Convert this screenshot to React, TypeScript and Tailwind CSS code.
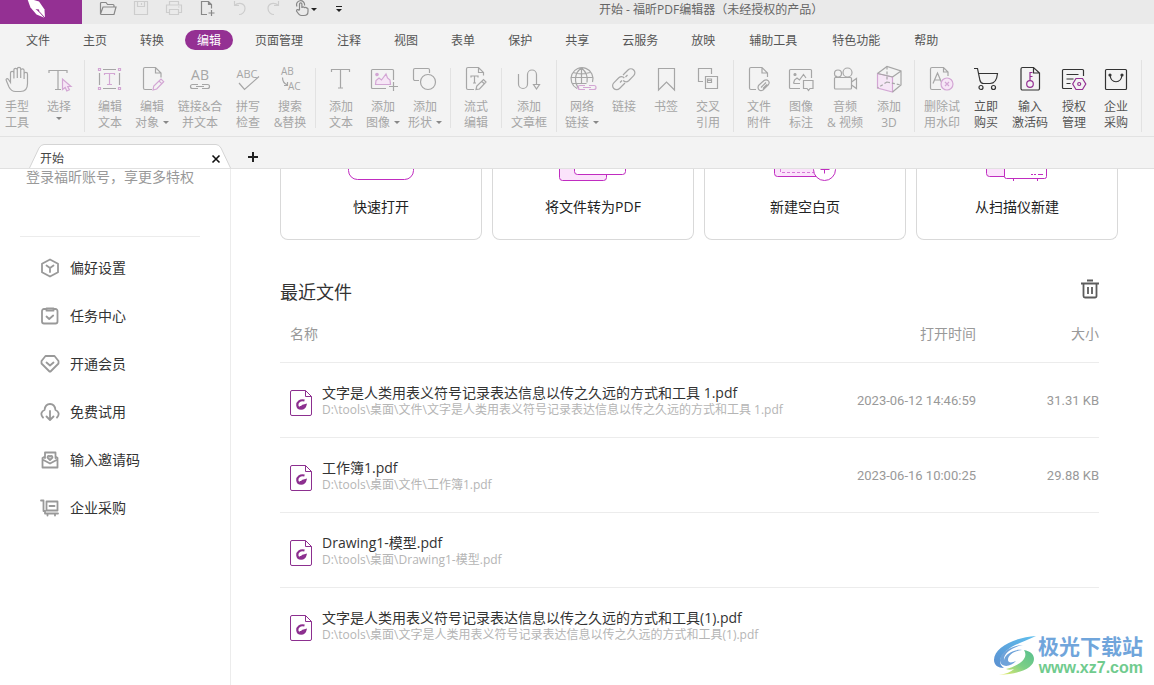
import type { ReactNode } from 'react';

type Tool = {
  lines: string[];
  icon: ReactNode;
  width?: string;
  caret?: boolean;
  active?: boolean;
};

type ToolGroup = {
  tools: Tool[];
  className?: string;
  line: string;
};

type RecentFile = {
  name: string;
  path: string;
  opened: string;
  size: string;
};

const PINK = '#d3a6d4';
const PURPLE = '#943093';

const menus = [
  '文件', '主页', '转换', '编辑', '页面管理', '注释', '视图', '表单',
  '保护', '共享', '云服务', '放映', '辅助工具', '特色功能', '帮助',
];

const docShape = 'M14 24.5H7a1.5 1.5 0 0 1-1.5-1.5V4A1.5 1.5 0 0 1 7 2.5h10.5l5.5 5.5v4.5M17.5 2.5V8H23';

const groups: ToolGroup[] = [
  {
    className: '',
    line: 'my-1',
    tools: [
      {
        lines: ['手型', '工具'],
        width: 'w-[34px]',
        icon: (
          <path d="M7.5 17.5l-2-3c-1.2-1.6-3-.6-2.2 1L6 22c1.500 3 3.500 4.500 6.500 4.500h5c4.500 0 7-3 7-8V9a1.700 1.700 0 0 0-3.400 0v5V5.500a1.700 1.700 0 0 0-3.400 0V13V4a1.700 1.700 0 0 0-3.400 0v9V5a1.700 1.700 0 0 0-3.400 0v8.500V8a1.700 1.700 0 0 0-3.400 0z" />
        ),
      },
      {
        lines: ['选择'],
        width: 'w-[50px]',
        caret: true,
        icon: (
          <>
            <path d="M4 8V5.5h18V8M13 5.5v19M10 24.5h6" />
            <path stroke={PINK} fill="#f6e6f6" d="M17.5 14v10.5l2.7-2 1.6 3.5 2.6-1.2-1.7-3.3h3.3z" />
          </>
        ),
      },
    ],
  },
  {
    line: 'mb-2 mt-3',
    tools: [
      {
        lines: ['编辑', '文本'],
        icon: (
          <>
            <path d="M7 4.5h13M7 23.5h13M3.5 8v12M23.5 8v12" />
            <path stroke={PINK} d="M8.5 10V8.5h10V10M13.5 8.5v11M11 19.5h5M2.5 3.5h2v2h-2zM22.5 3.5h2v2h-2zM2.5 22.5h2v2h-2zM22.5 22.5h2v2h-2z" />
          </>
        ),
      },
      {
        lines: ['编辑', '对象'],
        caret: true,
        icon: (
          <>
            <path d={docShape} />
            <path stroke={PINK} d="M15 25l.8-4 7.2-7 2.7 2.7-7 7.3zM21 16l2.7 2.7" />
          </>
        ),
      },
      {
        lines: ['链接&合', '并文本'],
        width: 'w-[54px]',
        icon: (
          <>
            <text x="14" y="15" textAnchor="middle" fontSize="14" stroke="none" fill="currentColor">AB</text>
            <path d="M12 19.5H6.500a2 2 0 0 0 0 4H12M16 19.500h5.500a2 2 0 0 1 0 4H16M10 21.500h8" />
          </>
        ),
      },
      {
        lines: ['拼写', '检查'],
        icon: (
          <>
            <text x="13" y="13" textAnchor="middle" fontSize="11" stroke="none" fill="currentColor">ABC</text>
            <path d="M5 18l5.5 6.5L25 11.5" />
          </>
        ),
      },
      {
        lines: ['搜索', '&替换'],
        icon: (
          <>
            <text x="5" y="10" fontSize="10" stroke="none" fill="currentColor">AB</text>
            <text x="12" y="25" fontSize="10" stroke="none" fill="currentColor">AC</text>
            <path d="M6.5 12.5c0 4 1 6 5 7.5M8 20.5h3.5V17" />
          </>
        ),
      },
    ],
  },
  {
    line: 'mb-2 mt-3',
    tools: [
      { lines: ['添加', '文本'], icon: <path d="M4.5 7V4.5h18V7M13.5 4.5V23M11 23h5" /> },
      {
        lines: ['添加', '图像'],
        caret: true,
        icon: (
          <>
            <path d="M17 23.5H3.5a1 1 0 0 1-1-1v-17a1 1 0 0 1 1-1h20a1 1 0 0 1 1 1V15M24.5 17v9M20 21.5h9" />
            <path stroke={PINK} fill="#f6e6f6" d="M6.5 19.500l.5-4 3-2.500 2.500 2L17 9l1.500 4 2.500 2 .5 4.500z" />
            <circle cx="8" cy="9.5" r="1.2" fill={PINK} stroke={PINK} />
          </>
        ),
      },
      {
        lines: ['添加', '形状'],
        caret: true,
        icon: (
          <>
            <path d="M8 15.5H4A1.5 1.5 0 0 1 2.5 14V5A1.5 1.5 0 0 1 4 3.5h13A1.5 1.5 0 0 1 18.5 5v3" />
            <circle cx="17" cy="17" r="7.5" />
          </>
        ),
      },
    ],
  },
  {
    line: 'mb-2 mt-3',
    tools: [
      {
        lines: ['流式', '编辑'],
        icon: (
          <>
            <path d="M12 24.5H6A1.5 1.5 0 0 1 4.5 23V4A1.5 1.5 0 0 1 6 2.5h10.5l5 5v3M16.5 2.5v5h5" />
            <path d="M9 12.5V11h7v1.5M12.5 11v7M11 18h3M14 24.5l.8-3.5 6.7-6.5 2.5 2.5-6.500 7zM19.500 16l2.500 2.500" />
          </>
        ),
      },
    ],
  },
  {
    line: 'my-1',
    tools: [
      {
        lines: ['添加', '文章框'],
        width: 'w-[46px]',
        icon: <path d="M3.5 9v10a4.5 4.5 0 0 0 9 0V9.5a4.5 4.5 0 0 1 9 0V19M18.5 19.5h6l-3 4.5z" />,
      },
    ],
  },
  {
    line: 'my-1',
    tools: [
      {
        lines: ['网络', '链接'],
        caret: true,
        icon: (
          <>
            <path d="M9 23.5A11 11 0 1 1 24.5 17M13.5 3C6 8 6 18 11 23.500M13.500 3c5 4 6.500 9 5.500 14.500M13.500 3v15M2.500 12.500h22M5 7.500c5 1.500 12 1.500 17 0M4.500 18.500h14" />
            <path stroke={PINK} d="M17 20.5h-5a2 2 0 0 0 0 4h5M21 20.5h5a2 2 0 0 1 0 4h-5M15 22.5h8" />
          </>
        ),
      },
      {
        lines: ['链接'],
        icon: (
          <path d="M13 10l5-5a4 4 0 0 1 5.7 5.7l-5 5c-1.7 1.5-4 1.5-5.5-.2M15 18l-5.5 5.5a4 4 0 0 1-5.700-5.700l5-5c1.700-1.500 4-1.500 5.500.2M10 17.500l2-2M15.500 12l2-2" />
        ),
      },
      { lines: ['书签'], icon: <path d="M6.5 3.5h16V25l-8-8-8 8z" /> },
      {
        lines: ['交叉', '引用'],
        icon: <path d="M9 16.5H4.5v-13h13V9M11.5 11.5h12v12h-12zM13.500 17.500V14h4v3.500zM13.500 15.500h4" />,
      },
    ],
  },
  {
    line: 'my-1',
    tools: [
      {
        lines: ['文件', '附件'],
        icon: (
          <>
            <path d="M11 24.5H6A1.5 1.5 0 0 1 4.5 23V4A1.5 1.5 0 0 1 6 2.5h11L22.5 8v4M17 2.5V8h5.5" />
            <path d="M13.5 20.500l5.500-5c3-2 6.500 1 4.500 4L18 25c-3 2-6-1-4.500-4.500zM16 22.500l5-5M18 23.500l4-4" />
          </>
        ),
      },
      {
        lines: ['图像', '标注'],
        icon: (
          <>
            <path d="M13 23.5H3.5a1 1 0 0 1-1-1v-17a1 1 0 0 1 1-1h20a1 1 0 0 1 1 1V13M6.5 18.5l1-3.5 2.5-2 2.5 2 4-5.500 2.500 3.500M6.500 18.500H13" />
            <path d="M16.5 15.5H26v8h-3l-1.5 2-1.5-2h-3.5z" />
            <circle cx="8" cy="9.5" r="1" fill="currentColor" />
          </>
        ),
      },
      {
        lines: ['音频', '& 视频'],
        width: 'w-[46px]',
        icon: (
          <>
            <rect x="3.5" y="12.5" width="17" height="11.5" rx="1" />
            <path d="M20.5 17l5-3.5v10l-5-3.5M4 12.5L6 11" />
            <circle cx="7" cy="8.5" r="3.5" />
            <circle cx="16.5" cy="7.5" r="4.5" />
          </>
        ),
      },
      {
        lines: ['添加', '3D'],
        icon: (
          <>
            <path d="M2.5 8.5l15 3.5v15l-15-4z" fill="#f6e6f6" stroke={PINK} />
            <path d="M2.5 8.5L12 1.5l14 4.5v14l-8.500 7M17.500 12L26 6M2.500 8.500l15 3.500" />
            <path d="M12 1.5V17M12 17l14 3M12 17l-9.500 6" strokeDasharray="3 2" />
          </>
        ),
      },
    ],
  },
  {
    line: 'my-1',
    tools: [
      {
        lines: ['删除试', '用水印'],
        width: 'w-[46px]',
        icon: (
          <>
            <path d="M13 24.5H4A1.5 1.5 0 0 1 2.500 23V4A1.500 1.500 0 0 1 4 2.500h11.500L20 7v4M15.500 2.500V7H20M5 18.500L9.500 8 14 18.500M6.500 15h6" />
            <circle cx="19" cy="19" r="6" stroke={PINK} fill="#f6e6f6" />
            <path stroke={PINK} d="M17 17l4 4M21 17l-4 4" />
          </>
        ),
      },
      {
        lines: ['立即', '购买'],
        active: true,
        icon: (
          <>
            <path d="M2 3.5h3.5L8 15.500c.6 2 1.500 3 3.500 3H18c5 0 7-4.500 7.500-10H6.500" />
            <circle cx="9" cy="22.5" r="2" />
            <circle cx="21.5" cy="22.5" r="2" />
          </>
        ),
      },
      {
        lines: ['输入', '激活码'],
        active: true,
        width: 'w-[46px]',
        icon: (
          <>
            <path d="M17.5 2.5h-11A1.5 1.5 0 0 0 5 4v19.5A1.5 1.5 0 0 0 6.5 25H22a1.500 1.500 0 0 0 1.500-1.500V8zM17.500 2.500V8H23" />
            <circle cx="14" cy="19" r="3.3" stroke={PURPLE} />
            <path stroke={PURPLE} d="M14 15.5v-8h2.5M14 11.5h2.5" />
          </>
        ),
      },
      {
        lines: ['授权', '管理'],
        active: true,
        icon: (
          <>
            <path d="M12 23.5H3.5a1 1 0 0 1-1-1v-17a1 1 0 0 1 1-1h19a1 1 0 0 1 1 1V11M6.5 9.5h12M6.5 14h7M6.5 18.5h4" />
            <path stroke={PURPLE} d="M16 13.5h6.500l3.300 5.500-3.300 5.500H16L12.700 19z" />
            <circle cx="19.2" cy="19" r="1.5" stroke={PURPLE} />
          </>
        ),
      },
      {
        lines: ['企业', '采购'],
        active: true,
        icon: (
          <>
            <rect x="3.5" y="4.5" width="21" height="20" rx="1" />
            <path d="M8 10c1 9 11 9 12 0" />
            <circle cx="8" cy="10" r="1" fill="currentColor" />
            <circle cx="20" cy="10" r="1" fill="currentColor" />
          </>
        ),
      },
    ],
  },
];

const sideLinks = [
  {
    label: '偏好设置',
    icon: <path d="M10 1.5l8 4.3v8.4l-8 4.300-8-4.300V5.800zM6.500 7.500L10 10l3.500-2.500M10 10v4" />,
  },
  {
    label: '任务中心',
    icon: <path d="M6 3H4a2 2 0 0 0-2 2v10.5a2 2 0 0 0 2 2h11.5a2 2 0 0 0 2-2V5a2 2 0 0 0-2-2H14M6.5 2.5h7v2.200h-7zM6.500 10.500L9.200 13l4-3.500" />,
  },
  {
    label: '开通会员',
    icon: <path d="M5.5 2h9L18.500 7v2.500L10.500 17.500h-1L1.500 9.500V7zM6.500 8.500l3.500 3 3.500-3" />,
  },
  {
    label: '免费试用',
    icon: <path d="M3 15.5C0 12.5 1.5 9 4.500 8c1-8 10-8 11 0 3 1 4.500 4.500 1.500 7.500M10 9v8.500M6.500 14.500L10 18l3.500-3.500" />,
  },
  {
    label: '输入邀请码',
    icon: <path d="M5 8V2.5h10.5V8M5 6.5L2.500 8v9.500h15V8l-2-1.500M2.500 9.500l7.500 4 7.500-4M10 10L7.500 7.500c0-2 2-2 2.500-.8.500-1.200 2.500-1.200 2.500.8z" />,
  },
  {
    label: '企业采购',
    icon: <path d="M1 2.5h2.5V13H5v2.500h13M6.500 3.500h11v9h-11zM9.500 8h5M7.500 16v1.500M15 16v1.500" />,
  },
];

const cards = [
  { label: '快速打开', icon: <path d="M37.5 0v1.500a9 9 0 0 0 9 9h47a9 9 0 0 0 9-9V0" /> },
  {
    label: '将文件转为PDF',
    icon: (
      <>
        <path fill="#fbe3fb" d="M36.500-5V8.500a3 3 0 0 0 3 3h41a3 3 0 0 0 3-3V0" />
        <path fill="#fff" d="M51.500-5V2.500a3 3 0 0 0 3 3h45a3 3 0 0 0 3-3V-5" />
      </>
    ),
  },
  {
    label: '新建空白页',
    icon: (
      <>
        <path fill="#fbe3fb" d="M39.500-5V4.500a3 3 0 0 0 3 3h50V-5" />
        <path strokeDasharray="3 2" opacity=".6" d="M45.500-5V3.500h34" />
        <circle cx="89.500" cy=".5" r="11" fill="#fff" />
        <path d="M89.500-5v9.500M85.500.5h9" />
      </>
    ),
  },
  {
    label: '从扫描仪新建',
    icon: (
      <>
        <path fill="#fbe3fb" d="M39.500-5V4.500a3 3 0 0 0 3 3H60V-5" />
        <path fill="#fff" d="M57.500-5V7.500a2 2 0 0 0 2 2h38a2 2 0 0 0 2-2V-5" />
        <path d="M66.500 9.500v3M90.500 9.500v3M84 5.500h2M87 5.500h2M91 5.500h5" />
      </>
    ),
  },
];

const files: RecentFile[] = [
  {
    name: '文字是人类用表义符号记录表达信息以传之久远的方式和工具 1.pdf',
    path: 'D:\\tools\\桌面\\文件\\文字是人类用表义符号记录表达信息以传之久远的方式和工具 1.pdf',
    opened: '2023-06-12 14:46:59',
    size: '31.31 KB',
  },
  {
    name: '工作簿1.pdf',
    path: 'D:\\tools\\桌面\\文件\\工作簿1.pdf',
    opened: '2023-06-16 10:00:25',
    size: '29.88 KB',
  },
  { name: 'Drawing1-模型.pdf', path: 'D:\\tools\\桌面\\Drawing1-模型.pdf', opened: '', size: '' },
  {
    name: '文字是人类用表义符号记录表达信息以传之久远的方式和工具(1).pdf',
    path: 'D:\\tools\\桌面\\文字是人类用表义符号记录表达信息以传之久远的方式和工具(1).pdf',
    opened: '',
    size: '',
  },
];

function Caret({ className = '' }: { className?: string }) {
  return <span className={`inline-block border-x-[3px] border-t-[3px] border-x-transparent border-t-current ${className}`} />;
}

function QuickButton({ label, children, className = 'text-[#cdcdcd]' }: { label: string; children: ReactNode; className?: string }) {
  return (
    <button aria-label={label} className={className}>
      <svg width="18" height="18" viewBox="0 0 18 18" fill="none" stroke="currentColor" strokeWidth="1.2" className="block">
        {children}
      </svg>
    </button>
  );
}

function TitleBar() {
  return (
    <header className="flex h-6 items-start bg-[#eaeaea] text-xs text-[#666]">
      <div className="h-6 w-[82px] shrink-0 bg-[#943093]">
        <svg width="82" height="24" viewBox="0 0 82 24" className="block">
          <path d="M27-2l12 3.5 5.500 8L45 18l-8.500-3.500-6-7z" fill="#fff" />
          <path d="M45 18L39 11.500" stroke="#943093" />
          <path d="M35.500 9l3.500.5.5 3z" fill="#943093" />
        </svg>
      </div>
      <div className="flex flex-1 items-center gap-[15px] pl-[17px]">
        <QuickButton label="打开" className="text-[#888]">
          <path d="M1.5 14V3.5a1 1 0 0 1 1-1H7l1.5 2H14a1 1 0 0 1 1 1V7M1.500 14L4 7h13l-2 7.500H2.500a1 1 0 0 1-1-.5z" />
        </QuickButton>
        <QuickButton label="保存"><path d="M2.5 1.5h13v13h-13zM5.5 1.5v5h7v-5M9.5 3v2" /></QuickButton>
        <QuickButton label="打印"><path d="M4.5 5V1.5h9V5M4 12.5H1.5V5h15v7.5H14M4.5 9.5h9v5h-9zM13 7h1.5" /></QuickButton>
        <QuickButton label="新建" className="text-[#888]"><path d="M9 14.5H3.5v-13h7l3 3v4M10.5 1.5v3h3M13.5 10v6M10.5 13h6" /></QuickButton>
        <QuickButton label="撤销"><path d="M3.5 1v4.5H8M3.5 5.5C8 1.5 14 3.5 14 8.500c0 3.500-3 6-6 6" /></QuickButton>
        <QuickButton label="重做"><path d="M14.5 1v4.5H10M14.5 5.5C10 1.5 4 3.500 4 8.500c0 3.500 3 6 6 6" /></QuickButton>
        <div className="-ml-1 flex items-center text-[#222]">
          <QuickButton label="触摸模式" className="text-[#888]">
            <path d="M6.5 10V4a1.2 1.2 0 0 1 2.400 0v4a1.200 1.200 0 0 1 2.400 0 1.200 1.200 0 0 1 2.200 0 1.200 1.200 0 0 1 1.500 1v2.500c0 2.500-1.500 4-4 4H8.500c-2.500 0-3.500-2-5-4.500 0-1.500 1.500-1.800 3-.5M4 6.500a4 4 0 1 1 7.500-1" />
          </QuickButton>
          <Caret />
        </div>
        <button aria-label="自定义工具栏" className="flex flex-col items-center gap-0.5 pl-1 text-[#222]">
          <span className="h-px w-1.5 bg-current" />
          <Caret />
        </button>
      </div>
      <h1 className="w-[555px] leading-5">开始 - 福昕PDF编辑器（未经授权的产品）</h1>
    </header>
  );
}

function MenuBar() {
  return (
    <nav className="flex h-8 items-center gap-[9px] pl-3.5 text-xs text-[#555]">
      {menus.map((m) => (
        <button
          key={m}
          className={
            m === '编辑'
              ? 'h-5 rounded-full bg-[#943093] px-3 leading-[22px] text-white'
              : m.length === 4
                ? 'h-5 px-[13px] leading-[22px]'
                : 'h-5 px-3 leading-[22px]'
          }
        >
          {m}
        </button>
      ))}
    </nav>
  );
}

function ToolButton({ tool }: { tool: Tool }) {
  const last = tool.lines.length - 1;
  return (
    <button
      className={`flex shrink-0 flex-col items-center ${tool.width || 'w-[42px]'} ${tool.active ? 'text-[#333]' : 'text-[#a6a6a6]'}`}
    >
      <svg width="28" height="28" viewBox="0 0 28 28" fill="none" stroke="currentColor" strokeWidth="1.2" className="overflow-visible">
        {tool.icon}
      </svg>
      <span className={`mt-1.5 block whitespace-nowrap text-xs leading-4 ${tool.active ? 'text-[#555]' : ''}`}>
        {tool.lines.map((line, i) => (
          <span key={line} className="flex items-center justify-center gap-1">
            {line}
            {tool.caret && i === last && i > 0 && <Caret className="mb-0.5 text-[#888]" />}
          </span>
        ))}
        {tool.caret && last === 0 && (
          <span className="flex justify-center pt-0.5"><Caret className="text-[#888]" /></span>
        )}
      </span>
    </button>
  );
}

function Ribbon() {
  return (
    <div className="flex h-[81px] border-b border-[#e2e2e2]">
      {groups.map((g) => (
        <div key={g.tools[0].lines.join('')} className="flex">
          <div className={`flex items-start pt-[9px] ${g.className ?? 'px-1'}`}>
            {g.tools.map((t) => (
              <ToolButton key={t.lines.join('')} tool={t} />
            ))}
          </div>
          <div className={`w-px bg-[#e2e2e2] ${g.line}`} />
        </div>
      ))}
    </div>
  );
}

function TabStrip() {
  return (
    <div className="flex h-8 items-end border-b border-[#e0e0e0] pl-[29px]">
      <div className="relative flex h-6 w-[202px] items-center justify-between pl-[11px] pr-2.5 pt-1.5 text-xs text-[#444]">
        <svg width="202" height="24" viewBox="0 0 202 24" className="absolute inset-0">
          <path d="M.5 24L10 4Q12 .5 15 .5H187Q190 .5 192 4L201.5 24" fill="#fff" stroke="#d4d4d4" />
        </svg>
        <span className="relative">开始</span>
        <button aria-label="关闭标签" className="relative text-[#111]">
          <svg width="10" height="10" viewBox="0 0 10 10" stroke="currentColor" strokeWidth="1.6"><path d="M1.5 1.5l7 7M8.5 1.5l-7 7" /></svg>
        </button>
      </div>
      <button aria-label="新建标签" className="mb-[5px] ml-4 text-[#222]">
        <svg width="12" height="12" viewBox="0 0 12 12" stroke="currentColor" strokeWidth="2" className="block"><path d="M6 1v10M1 6h10" /></svg>
      </button>
    </div>
  );
}

function Sidebar() {
  return (
    <aside className="w-[231px] shrink-0 border-r border-[#ececec]">
      <p className="h-4 pl-[26px] text-sm leading-4 text-[#999]">登录福昕账号，享更多特权</p>
      <hr className="ml-5 mr-[30px] mt-[51px] border-[#ececec]" />
      <nav className="mt-[7px]">
        {sideLinks.map((l) => (
          <a key={l.label} href="#" className="flex h-12 items-center gap-2.5 pl-10 text-sm text-[#333]">
            <svg width="20" height="20" viewBox="0 0 20 20" fill="none" stroke="#999" strokeWidth="1.8" strokeLinejoin="round" strokeLinecap="round">
              {l.icon}
            </svg>
            {l.label}
          </a>
        ))}
      </nav>
    </aside>
  );
}

function FileIcon() {
  return (
    <svg width="22" height="26" viewBox="0 0 22 26" fill="none" stroke="#8c2f8f" className="mt-1 shrink-0">
      <path d="M15.500.5H2A1.500 1.500 0 0 0 .5 2v22A1.500 1.500 0 0 0 2 25.500h18a1.500 1.500 0 0 0 1.500-1.500V6.500zM15.500.5v6h6" />
      <path d="M14.500 10.500C10 9.500 7 12 7.300 15.300c.4 4.200 7 4.700 8.200-.3l-3 .8c-.5 1.200-2 1.200-2 .2" strokeWidth="2.2" />
    </svg>
  );
}

function RecentFiles() {
  return (
    <section className="mr-[19px] mt-9">
      <div className="flex h-8 items-center justify-between">
        <h2 className="text-lg text-[#333]">最近文件</h2>
        <button aria-label="清空" className="mb-1.5">
          <svg width="18" height="20" viewBox="0 0 18 20" fill="none" stroke="#5c5c5c" strokeWidth="1.8" className="block">
            <path d="M6 1.5h6M0 4.5h18M2.5 4.5V17A1.5 1.5 0 0 0 4 18.5h10a1.500 1.500 0 0 0 1.500-1.500V4.500M7 8v7M11 8v7" />
          </svg>
        </button>
      </div>
      <table className="w-full text-left">
        <thead>
          <tr className="h-[54px] border-b border-[#ececec] text-sm text-[#999]">
            <th className="pb-0.5 pl-2.5 font-normal">名称</th>
            <th className="w-[140px] pb-0.5 text-right font-normal">打开时间</th>
            <th className="w-[123px] pb-0.5 text-right font-normal">大小</th>
          </tr>
        </thead>
        <tbody>
          {files.map((f) => (
            <tr key={f.name} className="h-[75px] border-b border-[#ececec] last:border-b-0">
              <td className="pl-2.5 pt-0.5">
                <div className="flex items-center gap-2.5">
                  <FileIcon />
                  <div className="whitespace-nowrap">
                    <a href="#" className="block text-sm leading-[18px] text-[#333]">{f.name}</a>
                    <span className="block text-xs leading-4 text-[#b5b5b5]">{f.path}</span>
                  </div>
                </div>
              </td>
              <td className="pt-0.5 text-right font-[Roboto,sans-serif] text-[13px] text-[#999]">{f.opened}</td>
              <td className="pt-0.5 text-right font-[Roboto,sans-serif] text-[13px] text-[#999]">{f.size}</td>
            </tr>
          ))}
        </tbody>
      </table>
    </section>
  );
}

function Watermark() {
  return (
    <div className="absolute bottom-[7px] right-[11px] flex items-center gap-0.5">
      <svg width="44" height="42" viewBox="0 0 44 42">
        <defs>
          <linearGradient id="swirl" x1="0" y1="1" x2="1" y2="0">
            <stop offset="0" stopColor="#5b8fd0" />
            <stop offset="1" stopColor="#5fc0ee" />
          </linearGradient>
          <linearGradient id="leaf" x1="0" y1="1" x2="1" y2="0">
            <stop offset="0" stopColor="#f1ee6d" />
            <stop offset=".5" stopColor="#7ccf86" />
            <stop offset="1" stopColor="#57bf8e" />
          </linearGradient>
        </defs>
        <path d="M44 1C24 2 2 12 2 25c0 5 4 8 10 8-6-4-5-11 2-17C21 10 31 7 44 1z" fill="url(#swirl)" />
        <path d="M31 10C20 10 7 18 8 26c1 7 11 6 16 0-4 2-8 2-8-1 0-5 6-9 14-10-8-1-17 4-18 10-1-6 8-13 19-15z" fill="#6fa3d9" />
        <path d="M32 15c6 1 10 4 10 9 0 8-12 15-35 16 7-1 12-3 15-6-3 1-6 1-8 0 9-2 24-9 18-19z" fill="url(#leaf)" />
      </svg>
      <div className="text-right">
        <p className="text-[21px] font-bold leading-6 text-[#70a5db]">极光下载站</p>
        <p className="font-['Liberation_Sans',sans-serif] text-base font-bold leading-5 text-[#70cb8e]">www.xz7.com</p>
      </div>
    </div>
  );
}

export default function App() {
  return (
    <div className="relative flex min-h-screen flex-col overflow-hidden bg-white font-['Open_Sans','Noto_Sans_CJK_SC',sans-serif]">
      <div className="bg-[#f3f3f3]">
        <TitleBar />
        <MenuBar />
        <Ribbon />
        <TabStrip />
      </div>
      <div className="flex flex-1">
        <Sidebar />
        <main className="min-w-0 flex-1 pl-[49px] pr-9">
          <div className="grid grid-cols-4 gap-2.5">
            {cards.map((c) => (
              <button key={c.label} className="flex h-[71px] flex-col items-center rounded-b-lg border border-t-0 border-[#d9d9d9] text-sm text-[#222]">
                <svg width="140" height="12" viewBox="0 0 140 12" fill="none" stroke="#c02cc0" className="block overflow-hidden">
                  {c.icon}
                </svg>
                <span className="mt-4 leading-5">{c.label}</span>
              </button>
            ))}
          </div>
          <RecentFiles />
        </main>
      </div>
      <Watermark />
    </div>
  );
}
